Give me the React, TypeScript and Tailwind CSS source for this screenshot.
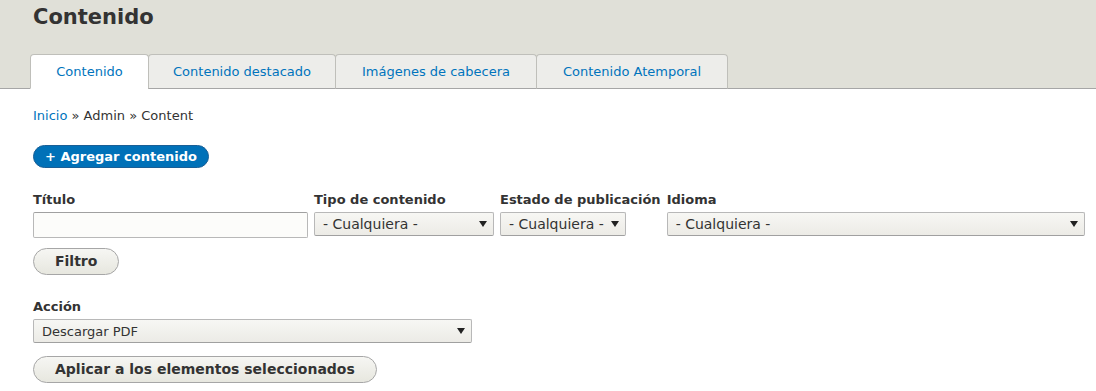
import React from 'react';

const tabs = [
  { label: 'Contenido', width: 'w-[119px]', active: true },
  { label: 'Contenido destacado', width: 'w-[188px]', active: false },
  { label: 'Imágenes de cabecera', width: 'w-[202px]', active: false },
  { label: 'Contenido Atemporal', width: 'w-[192px]', active: false },
];

const Arrow = () => (
  <svg width="8" height="6" viewBox="0 0 8 6" className="shrink-0">
    <path d="M0 0 L8 0 L4 6 Z" fill="#222" />
  </svg>
);

// Fake select box, Seven admin style
const SelectBox = ({ value, className }: { value: string; className: string }) => (
  <div
    className={`flex h-[24px] items-center justify-between gap-[4px] rounded-[2px] border border-[#b8b8b8] border-b-[#a0a0a0] bg-gradient-to-b from-[#f7f7f4] to-[#ecebe6] pl-[8px] pr-[6px] leading-none text-[#333] ${className}`}
  >
    <span className="whitespace-nowrap">{value}</span>
    <Arrow />
  </div>
);

const Label = ({ children }: { children: React.ReactNode }) => (
  <div className="h-[18px] whitespace-nowrap text-[13px] font-bold leading-[18px] text-[#333]">{children}</div>
);

export default function App() {
  return (
    <div className="min-h-screen bg-white font-['DejaVu_Sans',sans-serif] text-[13px] text-[#333]">
      {/* Header */}
      <div className="border-b border-[#a6a6a6] bg-[#e0e0d8] px-[30px] pt-[4px]">
        <h1 className="ml-[3px] h-[26px] text-[21px] font-bold leading-[26px] text-[#333]">Contenido</h1>
        <ul className="mt-[24px] flex">
          {tabs.map((t, i) => (
            <li
              key={t.label}
              className={`-mb-px flex h-[35px] items-center justify-center rounded-t-[4px] border border-[#bfbfba] text-[13px] text-[#0074bd] ${t.width} ${
                i > 0 ? '-ml-px' : ''
              } ${t.active ? 'border-b-white bg-white' : 'border-b-[#a6a6a6] bg-[#ededea]'}`}
            >
              {t.label}
            </li>
          ))}
        </ul>
      </div>

      {/* Body */}
      <div className="px-[33px]">
        <div className="mt-[18px] h-[18px] leading-[18px]">
          <span className="text-[#0074bd]">Inicio</span> » Admin » Content
        </div>

        <button className="mt-[20px] flex h-[23px] items-center rounded-full border border-[#1a5f96] bg-[#0071b8] px-[11px] text-[13px] font-bold text-white">
          + Agregar contenido
        </button>

        {/* Filters */}
        <div className="mt-[23px] flex gap-[6px]">
          <div className="flex flex-col gap-[3px]">
            <Label>Título</Label>
            <div className="h-[26px] w-[275px] rounded-[2px] border border-[#b8b8b8] border-t-[#a0a0a0] bg-[#fcfcfa]" />
          </div>
          <div className="flex flex-col gap-[3px]">
            <Label>Tipo de contenido</Label>
            <SelectBox value="- Cualquiera -" className="w-[180px] text-[14px]" />
          </div>
          <div className="flex flex-col gap-[3px]">
            <Label>Estado de publicación</Label>
            <SelectBox value="- Cualquiera -" className="w-[126px] text-[14px]" />
          </div>
          <div className="flex flex-col gap-[3px]">
            <Label>Idioma</Label>
            <SelectBox value="- Cualquiera -" className="w-[418px] text-[14px]" />
          </div>
        </div>

        <button className="mt-[10px] flex h-[27px] items-center rounded-full border border-[#a6a6a6] bg-gradient-to-b from-[#f6f6f3] to-[#e7e7df] px-[21px] text-[14px] font-bold text-[#333]">
          Filtro
        </button>

        {/* Bulk action */}
        <div className="mt-[23px] flex flex-col gap-[3px]">
          <Label>Acción</Label>
          <SelectBox value="Descargar PDF" className="w-[439px] text-[13px]" />
        </div>

        <button className="mt-[13px] flex h-[27px] items-center rounded-full border border-[#a6a6a6] bg-gradient-to-b from-[#f6f6f3] to-[#e7e7df] px-[21px] text-[14px] font-bold text-[#333]">
          Aplicar a los elementos seleccionados
        </button>
      </div>
    </div>
  );
}
